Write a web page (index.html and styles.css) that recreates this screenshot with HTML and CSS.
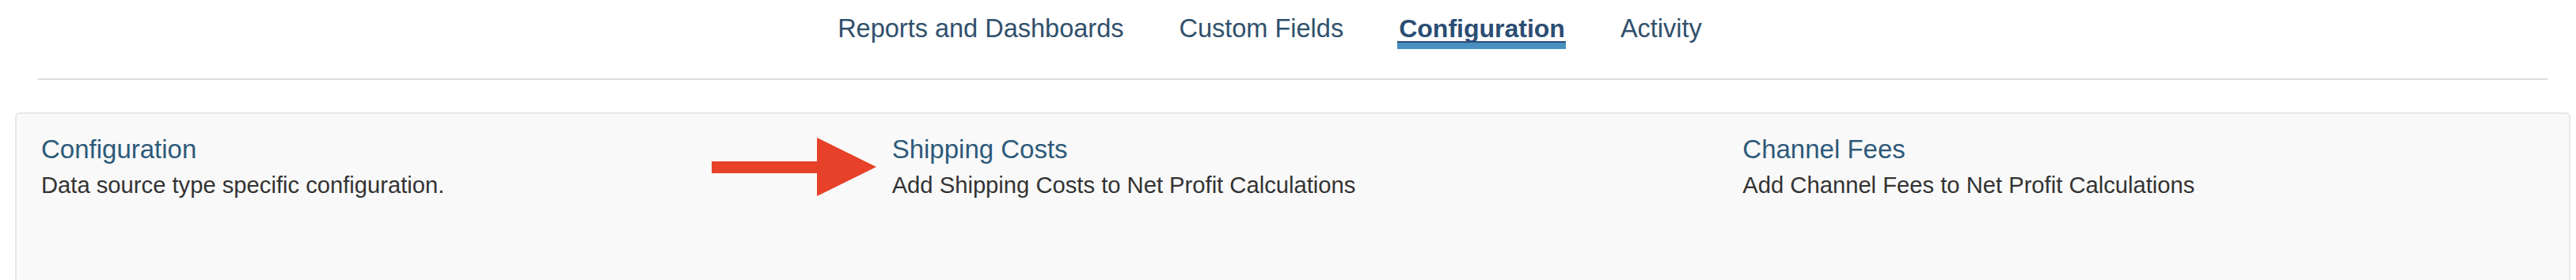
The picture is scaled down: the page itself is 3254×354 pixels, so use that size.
FILE: index.html
```html
<!DOCTYPE html>
<html lang="en">
<head>
<meta charset="utf-8">
<title>Configuration</title>
<link rel="stylesheet" href="styles.css">
</head>
<body>
<header class="header">
  <nav class="tabs">
    <a class="tab" href="#">Reports and Dashboards</a>
    <a class="tab" href="#">Custom Fields</a>
    <a class="tab active" href="#">Configuration</a>
    <a class="tab" href="#">Activity</a>
  </nav>
  <div class="divider"></div>
</header>
<main class="panel">
  <div class="row">
    <section class="col">
      <h4 class="title">Configuration</h4>
      <p class="desc">Data source type specific configuration.</p>
    </section>
    <section class="col">
      <svg class="arrow" width="208" height="74" viewBox="0 0 208 74" aria-hidden="true">
        <rect x="0" y="30" width="134" height="15" fill="#e8412a"/>
        <polygon points="133,0 208,37 133,74" fill="#e8412a"/>
      </svg>
      <h4 class="title">Shipping Costs</h4>
      <p class="desc">Add Shipping Costs to Net Profit Calculations</p>
    </section>
    <section class="col">
      <h4 class="title">Channel Fees</h4>
      <p class="desc">Add Channel Fees to Net Profit Calculations</p>
    </section>
  </div>
</main>
</body>
</html>
```

FILE: styles.css
```css
html, body {
  margin: 0;
  padding: 0;
  background: #ffffff;
  overflow: hidden;
}

body {
  font-family: "Liberation Sans", Arial, Helvetica, sans-serif;
  color: #333333;
}

.tabs {
  display: flex;
  justify-content: center;
  padding-right: 46px;
  height: 56px;
}

.tab {
  position: relative;
  display: block;
  padding: 16px 35px 0 35px;
  line-height: 40px;
  font-size: 32.5px;
  color: #30506c;
  text-decoration: none;
  white-space: nowrap;
}

.tab.active {
  font-weight: bold;
  font-size: 32px;
  color: #2b4d74;
}

.tab.active::after {
  content: "";
  position: absolute;
  left: 33px;
  right: 34px;
  top: 52px;
  height: 2px;
  background: #2d5079;
  border-bottom: 8px solid #4790bf;
}

.divider {
  height: 2px;
  background: #dddddd;
  margin: 43px 36px 0 48px;
}

.panel {
  box-sizing: border-box;
  margin: 41px 7px 0 19px;
  height: 212px;
  background: #f9f9f9;
  border: 2px solid #e8e8e8;
  border-bottom: 0;
  border-radius: 6px 6px 0 0;
}

.row {
  display: grid;
  grid-template-columns: repeat(3, 1fr);
}

.col {
  position: relative;
  padding: 25px 20px 0 31px;
}

.title {
  margin: 0 0 5px 0;
  font-size: 33px;
  line-height: 40px;
  font-weight: normal;
  color: #2e5a7a;
  white-space: nowrap;
}

.desc {
  margin: 0;
  font-size: 29.2px;
  line-height: 40px;
  color: #333333;
  white-space: nowrap;
}

.arrow {
  position: absolute;
  left: -197px;
  top: 30px;
}
```
